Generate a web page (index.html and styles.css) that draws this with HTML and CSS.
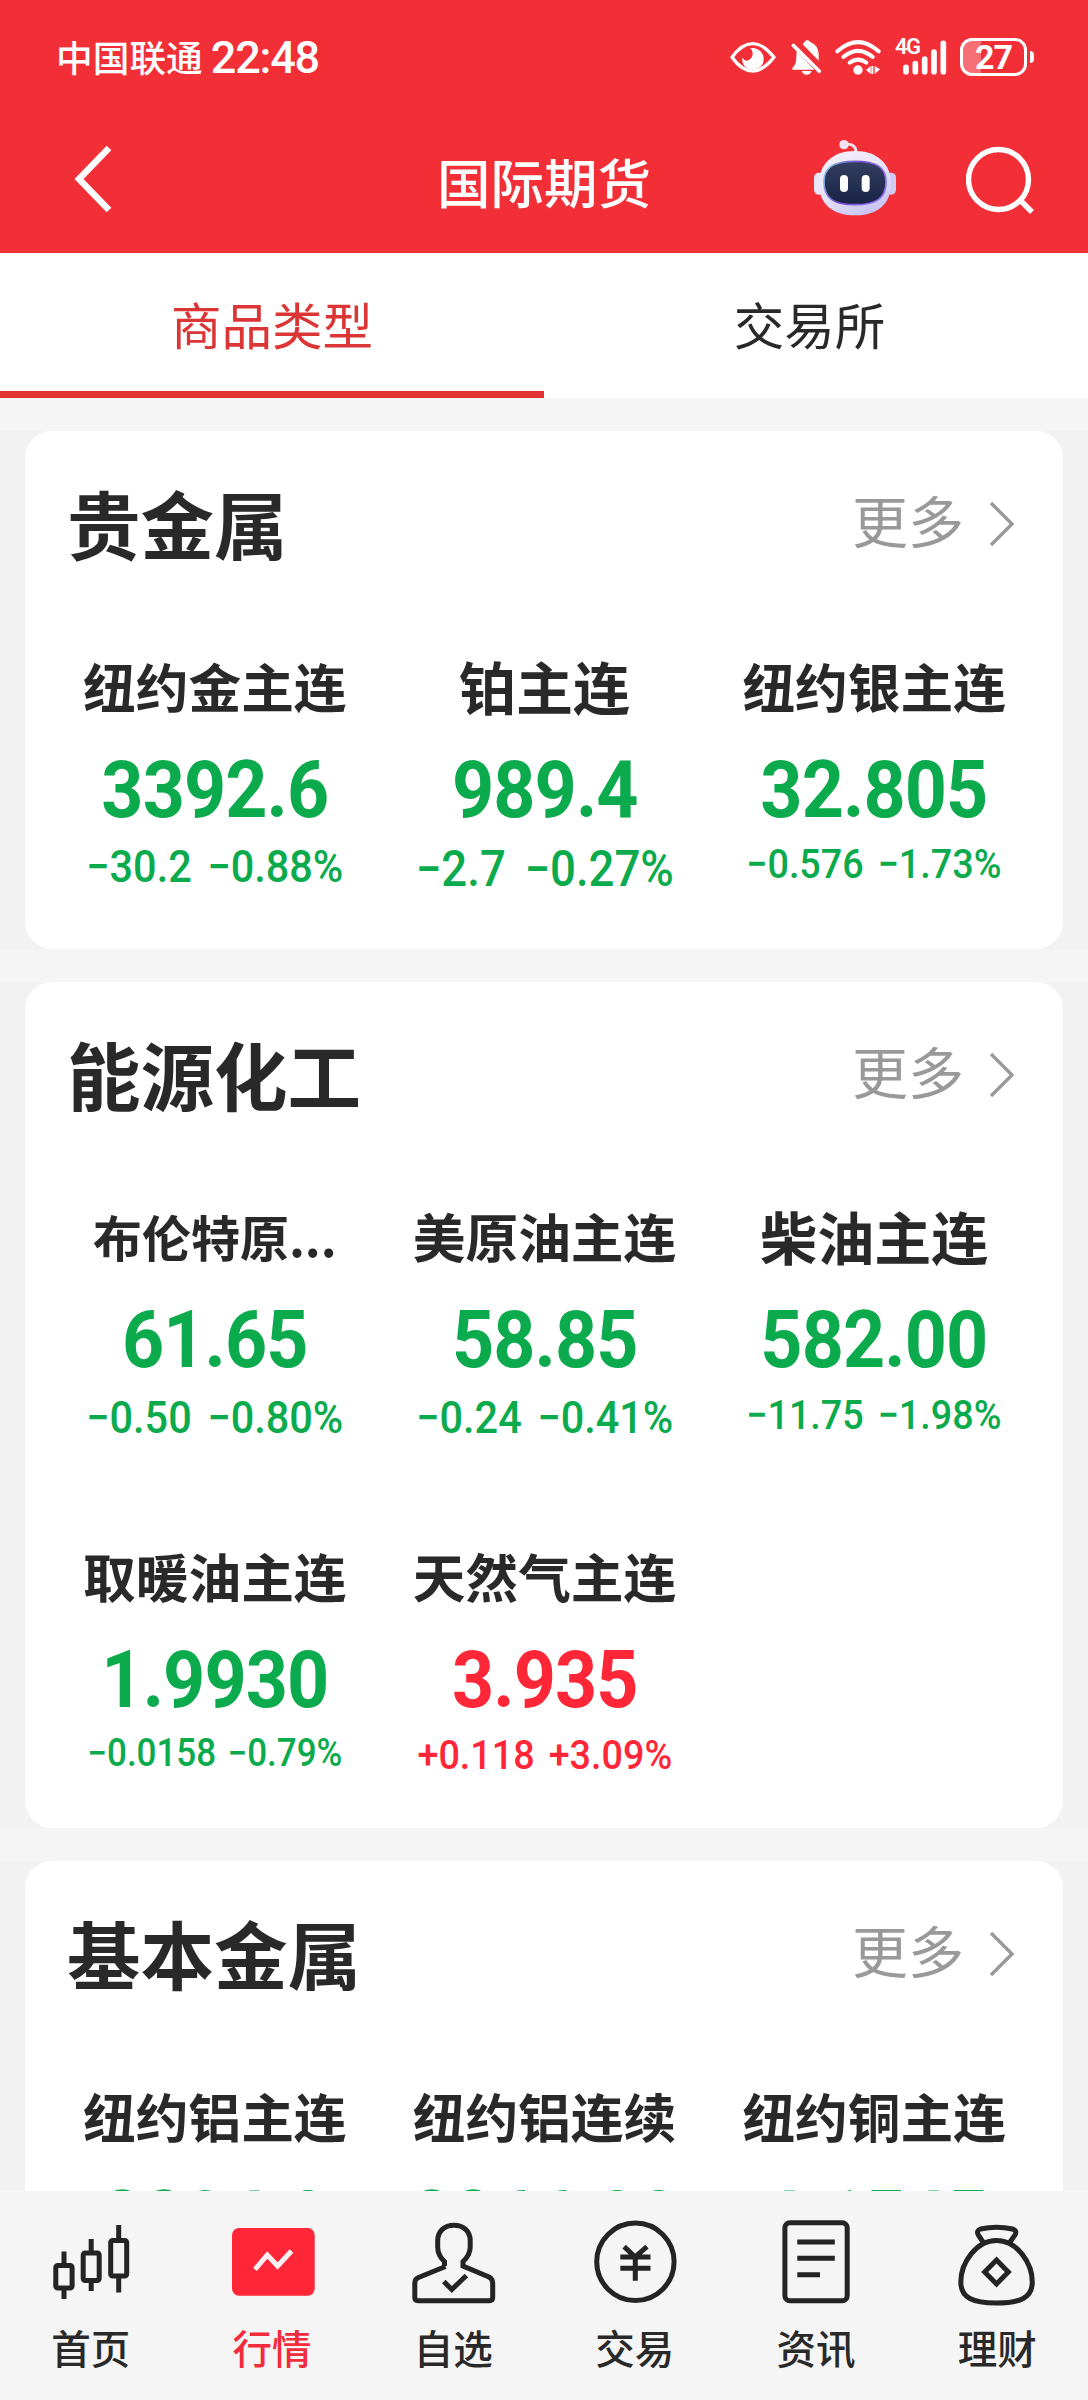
FILE: index.html
```html
<!DOCTYPE html>
<html lang="zh-CN">
<head>
    <meta charset="UTF-8">
    <meta name="viewport" content="width=device-width, initial-scale=1.0">
    <title>国际期货</title>
    <link rel="stylesheet" href="styles.css">
</head>
<body>
    <header class="header">
        <!-- 状态栏 -->
        <div class="status-bar">
            <span class="carrier">中国联通</span>
            <span class="time">22:48</span>
            <div class="status-icons">
                <svg class="icon-eye" viewBox="0 0 144 120" fill="none">
                    <path d="M9 61C28 34 48 20 71 20S114 34 135 61C114 88 94 102 71 102S28 88 9 61Z" stroke="#fff" stroke-width="10" stroke-linejoin="round"/>
                    <path d="M64 33C88 30 104 46 104 66C104 86 90 97 71 97C50 97 38 83 40 62C46 70 52 73 58 70C72 62 76 48 64 33Z" fill="#fff"/>
                </svg>
                <svg class="icon-bell" viewBox="0 0 100 120" fill="#fff">
                    <path d="M13 25L91 103" stroke="#fff" stroke-width="11" stroke-linecap="round"/>
                    <path d="M41 22L47 14Q55 6 63 14Q88 25 89 50V71Z"/>
                    <path d="M23 42L76 98H10Q8 92 16 86Q22 78 22 60Z"/>
                    <path d="M38 102H68Q64 113 53 113Q42 113 38 102Z"/>
                </svg>
                <svg class="icon-wifi" viewBox="0 0 140 120" fill="none">
                    <g stroke="#fff" stroke-width="12" stroke-linecap="round">
                        <path d="M7 43Q69 -12 131 43"/>
                        <path d="M25 60Q69 23 113 60"/>
                        <path d="M44 77Q69 59 94 77"/>
                    </g>
                    <circle cx="69" cy="99" r="14" fill="#fff"/>
                    <path d="M93 99L107 87V111ZM109 87H115V111H109ZM119 87L135 97L119 111Z" fill="#fff"/>
                </svg>
                <div class="signal">
                    <span class="signal-type">4G</span>
                    <svg class="icon-signal" viewBox="0 0 156 120" stroke="#fff" stroke-width="17" stroke-linecap="round">
                        <path d="M33 91V104M61 80V104M89 66V104M117 45V104M145 19V104"/>
                    </svg>
                </div>
                <div class="battery"><span>27</span></div>
                <i class="battery-cap"></i>
            </div>
        </div>
        <!-- 标题栏 -->
        <div class="title-bar">
            <div class="title-left">
                <svg class="icon-back" viewBox="0 0 40 70" fill="none" stroke="#fff" stroke-width="6.5">
                    <path d="M35 4L5 35L35 66"/>
                </svg>
            </div>
            <h1>国际期货</h1>
            <div class="title-right">
                <svg class="icon-robot" viewBox="0 0 246 228">
                    <defs>
                        <linearGradient id="shell" x1="0" y1="0" x2="0.6" y2="1">
                            <stop offset="0" stop-color="#f7f3fb"/>
                            <stop offset="0.6" stop-color="#e6e1f7"/>
                            <stop offset="1" stop-color="#c9c6f3"/>
                        </linearGradient>
                        <linearGradient id="rim" x1="0" y1="0" x2="1" y2="0.4">
                            <stop offset="0" stop-color="#7fd0e6"/>
                            <stop offset="0.5" stop-color="#7b4fd0"/>
                            <stop offset="1" stop-color="#8a6cf0"/>
                        </linearGradient>
                        <linearGradient id="face" x1="0" y1="0" x2="0" y2="1">
                            <stop offset="0" stop-color="#34405f"/>
                            <stop offset="1" stop-color="#182347"/>
                        </linearGradient>
                    </defs>
                    <path d="M92 14Q126 8 126 38" fill="none" stroke="#f3dfe9" stroke-width="9"/>
                    <circle cx="90" cy="14" r="14" fill="#f0e3ef"/>
                    <rect x="0" y="98" width="30" height="66" rx="14" fill="#e9e4f6"/>
                    <rect x="216" y="98" width="30" height="66" rx="14" fill="#cfcaf2"/>
                    <path d="M123 33C190 33 231 72 231 131C231 192 190 226 123 226S15 192 15 131C15 72 56 33 123 33Z" fill="url(#shell)"/>
                    <path d="M123 64C185 64 216 80 216 126C216 176 185 194 123 194S30 176 30 126C30 80 61 64 123 64Z" fill="url(#face)" stroke="url(#rim)" stroke-width="5"/>
                    <rect x="78" y="105" width="24" height="51" rx="12" fill="#fff"/>
                    <rect x="143" y="105" width="24" height="51" rx="12" fill="#fff"/>
                </svg>
                <svg class="icon-search" viewBox="0 0 68 68" fill="none" stroke="#fff" stroke-width="5.4">
                    <circle cx="32.5" cy="33.5" r="30"/>
                    <path d="M54 54L66 66"/>
                </svg>
            </div>
        </div>
    </header>

    <nav class="tabs">
        <a class="tab active">商品类型</a>
        <a class="tab">交易所</a>
    </nav>

    <main class="list">
        <!-- 贵金属 -->
        <section class="group">
            <div class="card">
                <div class="card-head">
                    <h2>贵金属</h2>
                    <a class="more">更多<svg viewBox="0 0 28 46"><path d="M3 2L24 23L3 44"/></svg></a>
                </div>
                <div class="quotes">
                    <div class="quote down">
                        <h3>纽约金主连</h3>
                        <p class="price">3392.6</p>
                        <p class="change size-m">−30.2 −0.88%</p>
                    </div>
                    <div class="quote down">
                        <h3 class="name-l">铂主连</h3>
                        <p class="price">989.4</p>
                        <p class="change size-l">−2.7 −0.27%</p>
                    </div>
                    <div class="quote down">
                        <h3>纽约银主连</h3>
                        <p class="price">32.805</p>
                        <p class="change size-s">−0.576 −1.73%</p>
                    </div>
                </div>
            </div>
        </section>

        <!-- 能源化工 -->
        <section class="group">
            <div class="card">
                <div class="card-head">
                    <h2>能源化工</h2>
                    <a class="more">更多<svg viewBox="0 0 28 46"><path d="M3 2L24 23L3 44"/></svg></a>
                </div>
                <div class="quotes">
                    <div class="quote down">
                        <h3 class="name-s">布伦特原...</h3>
                        <p class="price">61.65</p>
                        <p class="change size-m">−0.50 −0.80%</p>
                    </div>
                    <div class="quote down">
                        <h3>美原油主连</h3>
                        <p class="price">58.85</p>
                        <p class="change size-m">−0.24 −0.41%</p>
                    </div>
                    <div class="quote down">
                        <h3 class="name-l">柴油主连</h3>
                        <p class="price">582.00</p>
                        <p class="change size-s">−11.75 −1.98%</p>
                    </div>
                    <div class="quote down">
                        <h3>取暖油主连</h3>
                        <p class="price">1.9930</p>
                        <p class="change size-xs">−0.0158 −0.79%</p>
                    </div>
                    <div class="quote up">
                        <h3>天然气主连</h3>
                        <p class="price">3.935</p>
                        <p class="change size-s">+0.118 +3.09%</p>
                    </div>
                </div>
            </div>
        </section>

        <!-- 基本金属 -->
        <section class="group">
            <div class="card">
                <div class="card-head">
                    <h2>基本金属</h2>
                    <a class="more">更多<svg viewBox="0 0 28 46"><path d="M3 2L24 23L3 44"/></svg></a>
                </div>
                <div class="quotes">
                    <div class="quote down">
                        <h3>纽约铝主连</h3>
                        <p class="price">2284.0</p>
                    </div>
                    <div class="quote down">
                        <h3>纽约铝连续</h3>
                        <p class="price">2266.00</p>
                    </div>
                    <div class="quote down">
                        <h3>纽约铜主连</h3>
                        <p class="price">4.1545</p>
                    </div>
                </div>
            </div>
        </section>
    </main>

    <!-- 底部导航 -->
    <footer class="bottom-nav">
        <a class="nav-item">
            <svg viewBox="0 0 96 96">
                <rect x="12.8" y="50.5" width="16.3" height="22.5" rx="2"/>
                <rect x="40.2" y="38" width="16" height="27.5" rx="2"/>
                <rect x="67.7" y="25.5" width="16" height="35.5" rx="2"/>
                <path d="M21 36.5V50M21 74V84M48.2 24V37M48.2 66V76M75.7 10V25M75.7 62V77.5"/>
            </svg>
            <span>首页</span>
        </a>
        <a class="nav-item active">
            <svg viewBox="0 0 96 96">
                <rect class="solid" x="8" y="13" width="82.7" height="67.7" rx="7"/>
                <path class="light" d="M31 54.5L43.3 40L53.6 51L67.5 36"/>
            </svg>
            <span>行情</span>
        </a>
        <a class="nav-item">
            <svg viewBox="0 0 96 96">
                <path d="M39.5 51V46.5C34.5 42 32.7 38 32.7 32V25.5C32.7 16 39.5 10.2 49 10.2S65.2 16 65.2 25.5V32C65.2 38 63 42 58 46.5V51L84 62Q87.7 64 87.7 68V82.5Q87.7 85.7 84.5 85.7H13Q9.8 85.7 9.8 82.5V68Q9.8 64 13.5 62.5L40.5 51.5"/>
                <path d="M38.8 66.5L46.8 74.5L61.4 60.5"/>
            </svg>
            <span>自选</span>
        </a>
        <a class="nav-item">
            <svg viewBox="0 0 96 96">
                <circle cx="48.4" cy="46.8" r="38.7"/>
                <path d="M37.1 31.7L48.2 42L60 31.7M33.3 42H63.5M33.3 53.2H63.5M48.3 42V65.7"/>
            </svg>
            <span>交易</span>
        </a>
        <a class="nav-item">
            <svg viewBox="0 0 96 96">
                <rect x="16.9" y="7.8" width="62.3" height="78" rx="5"/>
                <path d="M29.3 27H66.8M29.3 43.2H66.8M29.3 59.7H52"/>
            </svg>
            <span>资讯</span>
        </a>
        <a class="nav-item">
            <svg viewBox="0 0 96 96">
                <path d="M47.5 25.5C27 25.5 11.8 48 11.8 67C11.8 83 24 88 47.5 88S83.3 83 83.3 67C83.3 48 68 25.5 47.5 25.5Z"/>
                <path d="M35 28.5L29.3 20Q27 15.5 31.5 14Q47.5 10.5 63.5 14Q68.5 15.5 66 20L60 28.5M47.5 45L59.3 57L47.5 69L35.7 57Z"/>
            </svg>
            <span>理财</span>
        </a>
    </footer>
</body>
</html>
```
FILE: styles.css
```css
/* 基本样式 */
* {
    margin: 0;
    padding: 0;
    box-sizing: border-box;
}

body {
    display: flex;
    flex-direction: column;
    width: 1088px;
    height: 2400px;
    overflow: hidden;
    font-family: "Noto Sans CJK SC", sans-serif;
    background-color: #f5f5f5;
    color: #292929;
}

svg {
    display: block;
}

/* 顶部 */
.header {
    height: 253px;
    background-color: #f22f37;
    color: #fff;
}

.status-bar {
    display: flex;
    align-items: center;
    height: 114px;
    padding: 0 54px 0 56px;
}

.carrier {
    padding-bottom: 3px;
    font-size: 36.7px;
    font-weight: 500;
}

.time {
    margin-left: 8px;
    font-family: Roboto, sans-serif;
    font-size: 45px;
    font-weight: 500;
    letter-spacing: -1.2px;
}

.status-icons {
    display: flex;
    align-items: center;
    margin-left: auto;
}

.status-icons svg {
    height: 40px;
}

.icon-eye {
    width: 48px;
    margin-right: 12px;
}

.icon-bell {
    width: 33.3px;
    margin-right: 13px;
}

.icon-wifi {
    width: 46.7px;
}

.signal {
    position: relative;
    margin: 0 13px 0 13px;
}

.icon-signal {
    width: 52px;
}

.signal-type {
    position: absolute;
    top: 0;
    left: 0;
    font-family: Roboto, sans-serif;
    font-size: 22px;
    font-weight: 600;
    line-height: 20px;
    letter-spacing: -1.5px;
}

.battery {
    width: 67px;
    height: 38px;
    border: 3px solid #fff;
    border-radius: 12px;
    background: linear-gradient(90deg, #f66f75 29%, transparent 29%);
    font-family: Roboto, sans-serif;
    font-size: 34px;
    font-weight: 700;
    line-height: 33px;
    letter-spacing: -1px;
    text-align: center;
}

.battery-cap {
    width: 4px;
    height: 12px;
    margin-left: 3px;
    border-radius: 0 4px 4px 0;
    background-color: #fff;
}

.title-bar {
    display: flex;
    align-items: center;
    height: 139px;
    padding: 0 54px;
}

.title-left,
.title-right {
    display: flex;
    flex: 1;
    align-items: center;
}

.title-right {
    justify-content: flex-end;
    gap: 70px;
    padding-bottom: 8px;
}

.icon-back {
    width: 40px;
    height: 70px;
    margin: 0 0 9px 20px;
}

h1 {
    padding-bottom: 7px;
    font-size: 53.5px;
    font-weight: 500;
}

.icon-robot {
    width: 82px;
    height: 76px;
    margin-bottom: 4px;
}

.icon-search {
    width: 68px;
    height: 68px;
}

/* 分类切换 */
.tabs {
    display: flex;
    height: 145px;
    margin-bottom: 33px;
    background-color: #fff;
}

.tab {
    width: 50%;
    font-size: 50.5px;
    line-height: 140px;
    text-align: center;
}

.tab:last-child {
    padding-right: 13px;
}

.tab.active {
    border-bottom: 7px solid #e33234;
    color: #dc3535;
}

/* 行情列表 */
.list {
    flex: 1;
    min-height: 0;
    overflow: hidden;
}

.group {
    padding: 0 25px;
    margin-bottom: 33px;
    background-color: #f2f2f2;
}

.card {
    border-radius: 27px;
    background-color: #fff;
}

.card-head {
    display: flex;
    align-items: center;
    justify-content: space-between;
    height: 186px;
    padding: 0 47px 0 42px;
}

h2 {
    padding-bottom: 4px;
    font-size: 73.5px;
    font-weight: 700;
}

.more {
    display: flex;
    align-items: center;
    height: 80px;
    color: #999;
    font-size: 56px;
    line-height: 70px;
}

.more svg {
    width: 28px;
    height: 46px;
    margin-left: 24px;
    fill: none;
    stroke: #999;
    stroke-width: 3.4;
}

/* 文字行高上移，与右侧箭头对齐 */
.more {
    align-items: flex-start;
}

.more svg {
    margin-top: 17px;
}

.quotes {
    display: grid;
    grid-template-columns: repeat(3, 1fr);
    row-gap: 98px;
    padding: 35.5px 24px 48px 25px;
}

.quote {
    text-align: center;
    white-space: nowrap;
}

h3 {
    height: 70px;
    font-size: 52.7px;
    font-weight: 700;
    line-height: 65px;
}

.name-s {
    font-size: 49px;
}

.name-l {
    font-size: 57px;
}

/* 数字字形略窄 */
.price,
.change {
    font-family: Roboto, sans-serif;
    transform: scaleX(0.92);
}

.price {
    height: 80px;
    margin: 26px 0 9.7px;
    font-size: 80px;
    font-weight: 700;
    line-height: 82px;
    letter-spacing: -1px;
}

.change {
    margin-bottom: -1px;
    font-weight: 500;
    line-height: 1.28;
    word-spacing: 3px;
}

.size-xs {
    font-size: 38px;
}

.size-s {
    font-size: 41px;
    word-spacing: 5px;
}

.size-m {
    font-size: 45px;
    word-spacing: 6px;
}

.size-l {
    font-size: 49.5px;
    word-spacing: 8px;
}

.down {
    color: #0baa4c;
}

.up {
    color: #ff2637;
}

.down h3,
.up h3 {
    color: #292929;
}

/* 底部导航 */
.bottom-nav {
    display: flex;
    height: 209px;
    padding-top: 24px;
    background-color: #f5f5f5;
}

.nav-item {
    display: flex;
    flex: 1;
    flex-direction: column;
    align-items: center;
    font-size: 39.5px;
    font-weight: 500;
    line-height: 60px;
}

.nav-item svg {
    width: 96px;
    height: 96px;
    margin-bottom: 6px;
    fill: none;
    stroke: #242424;
    stroke-width: 5;
}

.nav-item.active {
    color: #f22c3c;
}

.nav-item .solid {
    fill: #ff2637;
    stroke: none;
}

.nav-item .light {
    stroke: #fff0f2;
}
```
